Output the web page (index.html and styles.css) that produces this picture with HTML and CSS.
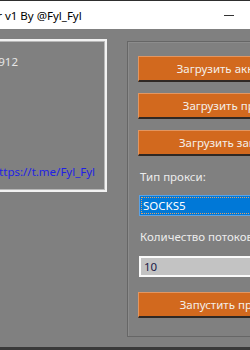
FILE: index.html
```html
<!DOCTYPE html>
<html>
    <head>
        <meta charset="utf-8" />
        <title>Parser v1 By @Fyl_Fyl</title>
        <link rel="stylesheet" href="styles.css">
    </head>
    <body>
        <div class="window">
            <div class="titlebar">
                <span class="title">Parser v1 By @Fyl_Fyl</span>
                <span class="minimize"></span>
            </div>
            <div class="client">
                <div class="infobox">
                    <div class="info">Версия: 1.0.912</div>
                    <a class="link" href="#">https://t.me/Fyl_Fyl</a>
                </div>
                <div class="settings">
                    <button class="btn">Загрузить аккаунты</button>
                    <button class="btn">Загрузить прокси</button>
                    <button class="btn">Загрузить запросы</button>
                    <div class="label">Тип прокси:</div>
                    <div class="combo"><span class="combo-focus">SOCKS5</span></div>
                    <div class="label label-threads">Количество потоков:</div>
                    <div class="textbox">10</div>
                    <button class="btn btn-start">Запустить процесс</button>
                </div>
            </div>
        </div>
    </body>
</html>
```

FILE: styles.css
```css
html, body {
    margin: 0;
    padding: 0;
}

body {
    width: 250px;
    height: 350px;
    overflow: hidden;
    font-family: "Noto Sans", "Open Sans", sans-serif;
    font-size: 11.5px;
}

.window {
    width: 250px;
    height: 350px;
    box-sizing: border-box;
    border-top: 1px solid #2e2e2e;
    border-bottom: 3px solid #3a3a3a;
    display: flex;
    flex-direction: column;
}

.titlebar {
    height: 28px;
    background: #fff;
    display: flex;
    align-items: center;
    justify-content: space-between;
    flex-shrink: 0;
}

.title {
    color: #000;
    margin-left: -33px;
    white-space: nowrap;
    margin-top: 1px;
}

.minimize {
    width: 10px;
    height: 1px;
    background: #333;
    margin-right: 16px;
}

.client {
    flex: 1;
    background: #808080;
    display: flex;
    align-items: flex-start;
    padding-top: 10px;
}

.infobox {
    flex-shrink: 0;
    width: 148px;
    height: 149px;
    margin-left: -45px;
    border: 2px solid #f2f2f2;
    box-shadow: inset 0 0 0 1px #b8b8b8;
    position: relative;
    color: #e6e6e6;
}

.info {
    position: absolute;
    top: 13px;
    right: 87px;
    white-space: nowrap;
}

.link {
    position: absolute;
    bottom: 11px;
    left: 35px;
    color: #1f1fe6;
    text-decoration: none;
    white-space: nowrap;
}

.settings {
    flex-shrink: 0;
    width: 220px;
    height: 296px;
    margin-left: 20px;
    margin-top: 2px;
    border: 1px solid #666;
    box-shadow: inset 1px 1px 0 #8c8c8c;
    padding: 14px 0 0 10px;
    box-sizing: border-box;
    display: flex;
    flex-direction: column;
    align-items: flex-start;
}

.btn {
    width: 186px;
    height: 26px;
    margin: 0 0 11px 0;
    padding: 0;
    background: #d2691e;
    color: #f4efe9;
    font-family: inherit;
    font-size: 11.5px;
    border: none;
    border-top: 1px solid #e39660;
    border-left: 1px solid #e39660;
    border-bottom: 2px solid #2f2824;
    box-sizing: border-box;
    flex-shrink: 0;
}

.label {
    color: #ececec;
    line-height: 16px;
    margin: 2px 0 0 2px;
    white-space: nowrap;
}

.combo {
    width: 120px;
    height: 21px;
    margin-top: 10px;
    margin-left: 1px;
    background: #0078d7;
    border: 1px solid #5ba3e6;
    box-sizing: border-box;
    padding: 1px;
}

.combo-focus {
    display: block;
    height: 17px;
    border: 1px dotted #e6a060;
    box-sizing: border-box;
    color: #fff;
    line-height: 15px;
    padding-left: 1px;
}

.label-threads {
    margin-top: 13px;
}

.textbox {
    width: 120px;
    height: 21px;
    margin-top: 11px;
    margin-left: 1px;
    background: #c3c3c3;
    border: 2px solid #fafafa;
    box-sizing: border-box;
    color: #1c1c48;
    line-height: 17px;
    padding-left: 3px;
}

.btn-start {
    margin-top: 15px;
}
```
